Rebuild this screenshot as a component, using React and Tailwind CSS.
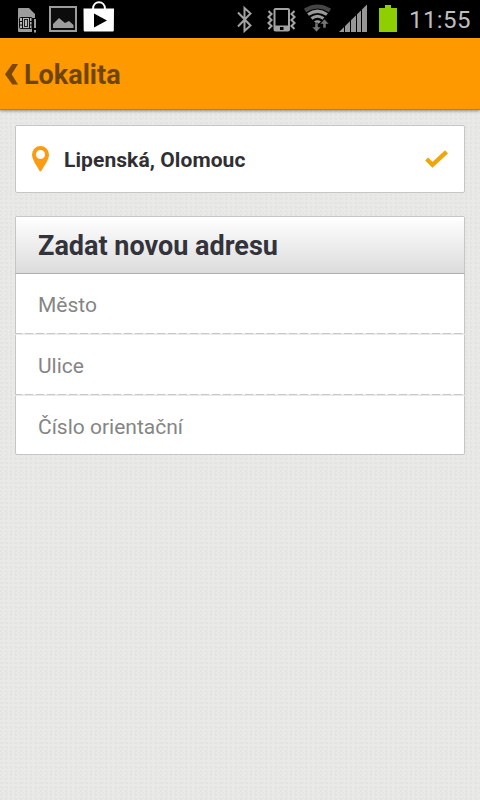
import React from "react";

function StatusBar() {
  return (
    <div className="flex h-[38px] w-full shrink-0 bg-black">
      <svg width="400" height="38" viewBox="0 0 400 38" className="block shrink-0">
        {/* SIM card */}
        <path d="M18 9q0-1 1-1h10l6 6v4h-3v14H19q-1 0-1-1z" fill="#9c9c9c" />
        <rect x="19.500" y="17.500" width="12.500" height="11" rx="1" fill="#b5b5b5" stroke="#111" />
        <path d="M22.500 17.500v11M29.500 17.500v11M19 21.500h3.500M19 25h3.500M29.500 21.500h3M29.500 25h3" stroke="#111" />
        <rect x="24.500" y="19.500" width="3" height="7" fill="none" stroke="#222" />
        <path d="M34 19h2v9h-2zM34 30h2v2.500h-2z" fill="#9c9c9c" />
        {/* picture */}
        <rect x="50" y="7" width="26" height="24" fill="#0c0c0c" stroke="#9c9c9c" strokeWidth="2" />
        <path d="M53 28v-4l6-6 6 5 4-2 4.500 4v3z" fill="#9c9c9c" />
        {/* play store bag */}
        <path d="M93 9c0-9 12-9 12 0" fill="none" stroke="#fff" strokeWidth="2" />
        <path d="M83.500 8.500h30.500l-.2 22q0 1-1 1H84.700q-1 0-1-1z" fill="#fff" />
        <path d="M94 13.500v14l13-7z" fill="#000" />
        {/* bluetooth */}
        <path d="M238 12.500l12.500 13-6 5.500V8l6 5.500-12.500 13" fill="none" stroke="#a3a3a3" strokeWidth="2" />
        {/* vibrating phone */}
        <path d="M275.500 8h12.500q2 0 2 2v19.500q0 2-2 2h-12.500q-2 0-2-2V10q0-2 2-2zM275.500 10v15.500H288V10zM280 27v3h3.500v-3z" fill="#a3a3a3" fillRule="evenodd" />
        <path d="M268 11l3 3-3 3 3 3-3 3 3 3-3 3M294 11l-3 3 3 3-3 3 3 3-3 3 3 3" fill="none" stroke="#a3a3a3" strokeWidth="2.100" transform="translate(.5 0)" />
        {/* wifi */}
        <g fill="none">
          <path d="M305 10.500q12.500-8 25 0" stroke="#454545" strokeWidth="4" />
          <path d="M308 14.500q9.500-6.500 19 0" stroke="#999" strokeWidth="3.200" />
          <path d="M311.500 18.500q6-4.500 12 0" stroke="#999" strokeWidth="3" />
        </g>
        <path d="M314 21.500q3.500-2.500 7 0l-3.500 3z" fill="#999" />
        <path d="M315 23h3v4h3l-4.500 5-4.500-5h3zM323 28v-4h-3l4.500-5 4.500 5h-3v4z" fill="#747474" stroke="#000" strokeWidth=".5" />
        {/* signal */}
        <path d="M339 32L367 4.500V32z" fill="#979797" />
        <path d="M344.500 24v8M350.500 18v14M356.500 12v20M361.500 7v25" stroke="#000" />
        {/* battery */}
        <path d="M379 8h6V5h6v3h6v24h-18z" fill="#8fce00" />
      </svg>
      <div className="ml-[9px] mt-[4px] h-8 whitespace-nowrap font-['Roboto',sans-serif] text-[24px] leading-8 tracking-[0.4px] text-[#bebebe]">
        11:55
      </div>
    </div>
  );
}

function AppHeader() {
  return (
    <header className="relative flex h-[72px] shrink-0 items-center border-b border-[#c07f12] bg-[#ff9900] pt-[2px] shadow-[0_1px_3px_rgba(0,0,0,0.4)]">
      <svg width="24" height="24" viewBox="0 0 24 24" className="shrink-0">
        <path d="M12.300 1H18l-6.300 10.300L18 21.500h-5.700L5 11.300z" fill="#7d4800" />
      </svg>
      <h1 className="whitespace-nowrap text-[27px] font-bold leading-8 text-[#6e4600]">Lokalita</h1>
    </header>
  );
}

function SelectedAddress() {
  return (
    <section className="flex h-[68px] shrink-0 items-center rounded-[2px] border border-[#c6c6c6] bg-white pl-4 pr-4">
      <svg width="17" height="26" viewBox="0 0 17 26" className="shrink-0">
        <path d="M8.500 0A8.500 8.500 0 0 0 0 8.500C0 14 5 20 7.500 24.800q1 1.400 2 0C12 20 17 14 17 8.500A8.500 8.500 0 0 0 8.500 0zM8.500 4a4.500 4.500 0 1 1 0 9 4.500 4.500 0 0 1 0-9z" fill="#fb9d14" fillRule="evenodd" />
      </svg>
      <span className="ml-[15px] flex-1 whitespace-nowrap pt-[2px] text-[21px] font-bold leading-7 tracking-[0.08px] text-[#303034]">Lipenská, Olomouc</span>
      <svg width="23" height="18" viewBox="0 0 23 18" className="shrink-0">
        <path d="M1.700 9l5.800 5.800L21.500 1.800" fill="none" stroke="#efa60a" strokeWidth="4.300" />
      </svg>
    </section>
  );
}

function Divider() {
  return (
    <div className="-mx-px h-[2px] shrink-0 bg-[#e9e9e9]">
      <div className="h-px bg-[repeating-linear-gradient(90deg,#c8c8c8_0px,#c8c8c8_8px,#ededed_8px,#ededed_11px)] bg-[position:-1px_0]" />
    </div>
  );
}

function Field({ label, className }) {
  return (
    <div className={"flex shrink-0 items-center pl-[22px] " + className}>
      <span className="whitespace-nowrap text-[21px] leading-7 text-[#858585]">{label}</span>
    </div>
  );
}

function AddressForm() {
  return (
    <section className="mt-[23px] flex flex-col rounded-[2px] border border-[#c6c6c6] bg-white">
      <div className="-mx-px flex h-[57px] items-center border-x border-b border-x-[#c6c6c6] border-b-[#adadad] bg-gradient-to-b from-white to-[#dcdcdc] pl-[22px] pt-[2px]">
        <h2 className="whitespace-nowrap text-[27px] font-bold leading-8 text-[#33333b]">Zadat novou adresu</h2>
      </div>
      <Field label="Město" className="h-[59px] pt-[2px]" />
      <Divider />
      <Field label="Ulice" className="h-[59px] pt-[2px]" />
      <Divider />
      <Field label="Číslo orientační" className="h-[58px] pt-[3px]" />
    </section>
  );
}

export default function App() {
  return (
    <div className="flex h-[800px] w-[480px] flex-col overflow-hidden bg-[#e9e9e7] font-['Roboto',sans-serif]">
      <StatusBar />
      <AppHeader />
      <main className="flex-1 bg-[radial-gradient(circle_at_1px_1px,#e3e3e1_0.8px,transparent_1px),radial-gradient(circle_at_3px_3px,#e5e5e3_0.8px,transparent_1px)] bg-[size:5px_4px,4px_5px] px-[15px] pt-[15px]">
        <SelectedAddress />
        <AddressForm />
      </main>
    </div>
  );
}
